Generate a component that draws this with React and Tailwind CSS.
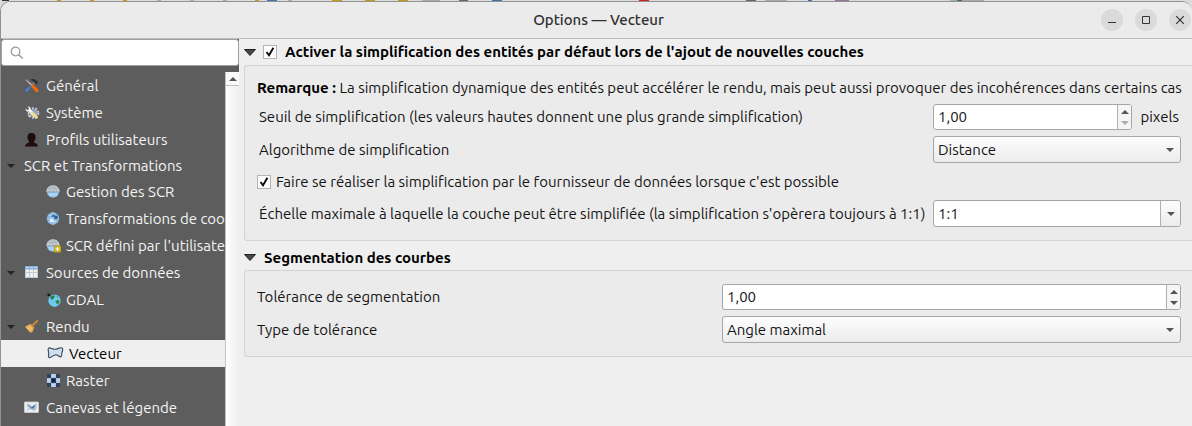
import { useState } from 'react';

const iconBox = 'h-4 w-4 shrink-0';

function ToolsIcon() {
  return (
    <svg className={iconBox} viewBox="0 0 16 16" aria-hidden="true">
      <path d="M2.200 13 7.500 7.500" stroke="#3f72b8" strokeWidth="2.800" strokeLinecap="round" />
      <path d="M2.500 12.700 4.500 10.500" stroke="#7fa8dc" strokeWidth=".9" />
      <path d="M3.500 3.200 8.500 7.800" stroke="#c4c4c4" strokeWidth="1.200" />
      <path d="M8.500 6.500 11.500 3.500" stroke="#8a8a8a" strokeWidth="1.400" />
      <path d="M8.500 8 13 12.700" stroke="#f0690c" strokeWidth="3.200" strokeLinecap="round" />
      <path d="M1.200 2.200 4 4.600 5 3.400 2.600 1.200z" fill="#9a9a9a" />
      <path d="M6 1.500C9 .2 12.500 .8 14 5.200L12 6.200 10.500 4.500 8.500 3z" fill="#2b2f33" />
    </svg>
  );
}

function GearWrenchIcon() {
  return (
    <svg className={iconBox} viewBox="0 0 16 16" aria-hidden="true">
      <circle cx="9.500" cy="8" r="4.800" fill="none" stroke="#c2cfdd" strokeWidth="2" strokeDasharray="2 1.400" />
      <circle cx="9.500" cy="8" r="4" fill="#94a6ba" />
      <path d="M1.500 3.500 3.200 5 4.800 4.400 4.600 2.500 3.200 1.500C5.400 1 6.800 2.400 6.700 4.200L9 7 7 9 4.600 6.600C2.500 6.800 1.300 5.500 1.500 3.500z" fill="#f4f4f4" />
      <path d="M8.300 8.500 12.200 12" stroke="#f0de92" strokeWidth="3.400" strokeLinecap="round" />
      <path d="M4 9.500 6 12" stroke="#e0e0e0" strokeWidth="1.200" />
    </svg>
  );
}

function UserIcon() {
  return (
    <svg className={iconBox} viewBox="0 0 16 16" aria-hidden="true">
      <path d="M7.500 1C4.500 1 3.200 3 3.400 5.600 3.600 7.600 4.600 9 5.400 9.800 5.400 11.200 1.200 11 1 14.500H14C13.800 11 9.700 11.200 9.700 9.800 10.700 8.800 11.500 7.400 11.600 5.400 11.800 2.800 10.400 1 7.500 1z" fill="#1d0d0c" />
    </svg>
  );
}

function GlobeIcon({ badge = false, arrows = false }) {
  const line = arrows ? '#b9d6f0' : '#98a6b5';
  return (
    <svg className={iconBox} viewBox="0 0 16 16" aria-hidden="true">
      <circle cx="7" cy="7.500" r="6.200" fill={arrows ? '#7fb0e0' : '#86b9ea'} />
      {!arrows && <path d="M.2 7.800C.4 4 3.500 1.200 7 1.200S13.600 4 13.800 7.800z" fill="#c6cace" />}
      <path d="M1 7.700H13M7 1.500V13.500M2.100 4.500H11.900M2.100 10.800H11.900" stroke={line} strokeWidth=".6" />
      <ellipse cx="7" cy="7.500" rx="3.200" ry="6" fill="none" stroke={line} strokeWidth=".6" />
      {!arrows && <path d="M2 9H12L10.500 12.300H3.500z" fill="#b5dbfa" opacity=".8" />}
      {arrows && (
        <>
          <path d="M5 5.200C7 3.500 9 3.800 10 5L11.500 4V8H7.800L9 6.500C8 5.500 6.500 5.500 5 5.200z" fill="#2c5f96" />
          <path d="M10 9.500C8.500 11.500 6.500 11.500 5.200 10.500L4 11.800V8H7.500L6.500 9.200C7.500 10 8.700 9.800 10 9.500z" fill="#eaf3fb" />
        </>
      )}
      {badge && (
        <>
          <rect x="8" y="7.500" width="7" height="7" rx="1" fill="#c3a00c" />
          <path d="M11.500 8.700V13.300M9.200 11H13.800M9.900 9.400 13.100 12.600M13.100 9.400 9.900 12.600" stroke="#fffbe0" strokeWidth=".9" />
        </>
      )}
    </svg>
  );
}

function TableIcon() {
  return (
    <svg className={iconBox} viewBox="0 0 16 16" aria-hidden="true" shapeRendering="crispEdges">
      <rect x="1" y="1" width="13" height="12" fill="#c3ccd6" />
      <rect x="1" y="1" width="13" height="3" fill="#83aedb" />
      <path d="M2 2h3v1H2zM6 2h3v1H6zM10 2h3v1h-3z" fill="#c4daf0" />
      <path d="M2 5h3v2H2zM6 5h3v2H6zM10 5h3v2h-3zM2 8h3v4H2zM6 8h3v4H6zM10 8h3v4h-3z" fill="#eef1f4" />
    </svg>
  );
}

function EarthIcon() {
  return (
    <svg className={iconBox} viewBox="0 0 16 16" aria-hidden="true">
      <circle cx="8.500" cy="8.700" r="6.200" fill="#6cc9f0" />
      <path d="M4.500 4.900C6 3.500 7.500 3.200 8.800 3.600L8.300 5.500 6.500 7.700 4.700 7z" fill="#2b7f3e" />
      <path d="M9.300 8.800 12.300 8 13.800 9.500 12 12.500 10.200 11.300z" fill="#2f8743" />
      <path d="M10.300 4 12.300 5 11.500 6.300z" fill="#3d9650" />
      <path d="M0 3H5M2.800 .8V4M1.200 1.200 4.800 4.800" stroke="#222" strokeWidth=".6" />
      <circle cx="2.900" cy="3" r="1" fill="#161616" />
    </svg>
  );
}

function BroomIcon() {
  return (
    <svg className={iconBox} viewBox="0 0 16 16" aria-hidden="true">
      <path d="M8.500 6.700 13.300 1.900" stroke="#cf9036" strokeWidth="1.800" strokeLinecap="round" />
      <path d="M1 7.800 6.500 4.800 10.200 8.500 8.500 13 6.200 13.800z" fill="#e6a954" />
      <path d="M3 8.300 7 12M5 7.200 8.200 10.300" stroke="#f8d69c" strokeWidth=".9" />
      <path d="M6.700 5.200 9.900 8.400" stroke="#b57d2c" strokeWidth="1" />
    </svg>
  );
}

function PolygonIcon() {
  return (
    <svg className="h-4 w-[19px] shrink-0" viewBox="0 0 19 16" aria-hidden="true">
      <path d="M2.500 2.300C4 .8 6 3.400 9 3.300 12 3.200 14 1 16 1.900 17.600 2.800 16.500 5 15.800 7 15.400 8.600 16.500 9.800 15 10.800 13.200 11.500 12.500 8.800 10 8.800 7 8.900 5.500 11.800 3.300 11.600 1.300 11 2.900 8.800 2.700 7 2.500 5 1.500 3.700 2.500 2.300z" fill="#d0dfef" stroke="#39495a" strokeWidth="1.100" />
    </svg>
  );
}

function RasterIcon() {
  return (
    <svg className={iconBox} viewBox="0 0 16 16" aria-hidden="true" shapeRendering="crispEdges">
      <rect x="1" y="1" width="13" height="13" fill="#2f415c" />
      <path d="M5 1h5v4H5zM1 5h4v5H1zM10 5h4v5h-4zM5 10h5v4H5z" fill="#a9c3df" />
      <path d="M6 1h3v3H6zM1 6h3v3H1zM11 6h3v3h-3zM6 11h3v3H6z" fill="#bdd2e8" />
      <path d="M6 6h3v3H6z" fill="#121f33" />
    </svg>
  );
}

function MapIcon() {
  return (
    <svg className={iconBox} viewBox="0 0 16 16" aria-hidden="true">
      <rect x=".5" y="2" width="14" height="10.500" rx=".6" fill="#efefef" stroke="#c8c8c8" />
      <path d="M3 3.500 5.500 4.500 8 6 12.500 3.500V8L10.500 11 8.500 10 6 9 3 10.500z" fill="#a4bcd6" />
      <path d="M4 5 7.500 7.500 11.500 4.200 9.500 8.300 7.500 8.500z" fill="#4d6c8e" />
      <path d="M3 6.500 5.500 8 3 9.500z" fill="#e6eef6" />
    </svg>
  );
}

const tree = [
  { label: 'Général', Icon: ToolsIcon },
  { label: 'Système', Icon: GearWrenchIcon },
  { label: 'Profils utilisateurs', Icon: UserIcon },
  { label: 'SCR et Transformations', open: true },
  { label: 'Gestion des SCR', Icon: GlobeIcon, child: true },
  { label: 'Transformations de coo', Icon: GlobeIcon, iconProps: { arrows: true }, child: true },
  { label: "SCR défini par l'utilisate", Icon: GlobeIcon, iconProps: { badge: true }, child: true },
  { label: 'Sources de données', Icon: TableIcon, open: true },
  { label: 'GDAL', Icon: EarthIcon, child: true },
  { label: 'Rendu', Icon: BroomIcon, open: true },
  { label: 'Vecteur', Icon: PolygonIcon, child: true },
  { label: 'Raster', Icon: RasterIcon, child: true },
  { label: 'Canevas et légende', Icon: MapIcon },
];

function Arrow({ up = false, className = '' }) {
  return (
    <svg className={`h-1 w-2 shrink-0 ${className}`} viewBox="0 0 8 4" aria-hidden="true">
      <path d={up ? 'M0 4 4 0 8 4z' : 'M0 0H8L4 4z'} fill="currentColor" />
    </svg>
  );
}

function TreeItem({ item, selected, onSelect }) {
  const { label, Icon, iconProps, child, open } = item;
  return (
    <li>
      <button
        type="button"
        onClick={onSelect}
        aria-current={selected ? 'page' : undefined}
        className={`flex w-full items-center whitespace-nowrap text-left ${Icon ? 'h-[27px]' : 'h-[25px]'} ${
          selected ? 'bg-[#efefef] text-black' : 'text-[#f4f4f4]'
        } ${child ? 'pl-[45px]' : 'pl-[6px]'}`}
      >
        {!child && (
          <span className="flex w-[17px] shrink-0">{open && <Arrow className="text-[#232323]" />}</span>
        )}
        {Icon && (
          <span className={`flex shrink-0 ${child ? 'mr-1' : 'mr-[6px]'}`}>
            <Icon {...iconProps} />
          </span>
        )}
        <span>{label}</span>
      </button>
    </li>
  );
}

function Check({ id, label, labelClass = '' }) {
  return (
    <span className="flex items-center">
      <span className="relative flex h-[14px] w-[14px] shrink-0">
        <input
          id={id}
          type="checkbox"
          defaultChecked
          className="peer h-[14px] w-[14px] appearance-none border border-[#b4b4b4] bg-white"
        />
        <svg className="pointer-events-none absolute inset-0 hidden peer-checked:block" viewBox="0 0 14 14" aria-hidden="true">
          <path d="M3.500 7 6 10.300 10.400 2.800" fill="none" stroke="#0c0c0c" strokeWidth="1.900" />
        </svg>
      </span>
      <label htmlFor={id} className={`whitespace-nowrap ${labelClass}`}>
        {label}
      </label>
    </span>
  );
}

function Spin({ id, className = '', downDisabled = false }) {
  return (
    <div className={`flex h-[26px] overflow-hidden rounded-[3px] border border-[#a6a6a6] bg-white ${className}`}>
      <input id={id} type="text" defaultValue="1,00" className="w-0 min-w-0 grow px-1 outline-none" />
      <div className="flex w-[14px] flex-col border-l border-[#b0b0b0] bg-[#f5f5f5]">
        <button type="button" aria-label="Augmenter" className="flex flex-1 items-center justify-center pt-px text-[#555]">
          <Arrow up />
        </button>
        <button
          type="button"
          aria-label="Diminuer"
          className={`flex flex-1 items-center justify-center pb-px ${downDisabled ? 'text-[#acacac]' : 'text-[#555]'}`}
        >
          <Arrow />
        </button>
      </div>
    </div>
  );
}

function Select({ id, options }) {
  return (
    <div className="relative">
      <select
        id={id}
        className="block h-[27px] w-full appearance-none rounded-[3px] border border-[#a6a6a6] bg-linear-to-b from-[#fdfdfd] to-[#ececec] px-1 outline-none"
      >
        {options.map((o) => (
          <option key={o}>{o}</option>
        ))}
      </select>
      <span className="pointer-events-none absolute inset-y-0 right-[7px] flex items-center text-[#555]">
        <Arrow />
      </span>
    </div>
  );
}

function GroupArrow() {
  return (
    <svg className="h-[7px] w-3 shrink-0" viewBox="0 0 12 7" aria-hidden="true">
      <path d="M.5 .5H11.500L6 6.500z" fill="#484848" stroke="#222" />
    </svg>
  );
}

function ToolbarPeek() {
  return (
    <svg className="block h-px w-full" viewBox="0 0 1192 1" preserveAspectRatio="none" aria-hidden="true">
      <path d="M2 .5h7" stroke="#333" />
      <path d="M57 .5h4M90 .5h4M123 .5h4M255 .5h4M332 .5h10M365 .5h10M398 .5h10" stroke="#c79a12" />
      <path d="M267 .5h10M492 .5h10M808 .5h4" stroke="#4470a5" />
      <path d="M157 .5h4M190 .5h4M223 .5h4M288 .5h4M422 .5h18M765 .5h22M950 .5h34" stroke="#aaa" />
      <path d="M639 .5h10" stroke="#c22" />
      <path d="M835 .5h14" stroke="#92749c" />
      <path d="M459 .5h9M746 .5h10" stroke="#666" />
      <path d="M957 .5h5" stroke="#3a7a3a" />
    </svg>
  );
}

export default function App() {
  const [selected, setSelected] = useState('Vecteur');
  const winBtn = 'flex h-[22px] w-[22px] items-center justify-center rounded-full bg-[#dadada]';
  return (
    <div className="flex min-h-screen flex-col bg-[#dcddda] font-['Ubuntu','Noto_Sans',sans-serif] text-[15px] leading-5 text-[#141414]">
      <ToolbarPeek />
      <div className="flex grow flex-col overflow-hidden rounded-t-[10px] border-l border-t border-[#929292] bg-[#efefef]">
        <header className="grid h-[37px] grid-cols-[1fr_auto_1fr] items-center border-b border-[#bdbdbd] bg-[#ebebeb] pl-1">
          <h1 className="col-start-2 font-medium text-[#303030]">Options — Vecteur</h1>
          <div className="flex justify-end gap-3 pr-px">
            <button type="button" aria-label="Réduire" className={winBtn}>
              <svg className="h-3 w-3" viewBox="0 0 12 12" aria-hidden="true">
                <path d="M2 8.500H10" stroke="#333" />
              </svg>
            </button>
            <button type="button" aria-label="Agrandir" className={winBtn}>
              <svg className="h-3 w-3" viewBox="0 0 12 12" aria-hidden="true">
                <path d="M2.500 2.500H9.500V9.500H2.500z" fill="none" stroke="#333" />
              </svg>
            </button>
            <button type="button" aria-label="Fermer" className={winBtn}>
              <svg className="h-3 w-3" viewBox="0 0 12 12" aria-hidden="true">
                <path d="M2.200 2.200 9.800 9.800M9.800 2.200 2.200 9.800" stroke="#333" strokeWidth="1.200" />
              </svg>
            </button>
          </div>
        </header>

        <div className="flex grow">
          <aside className="flex w-[238px] shrink-0 flex-col bg-[#5d5d5d]">
            <div className="flex h-[27px] shrink-0 items-center rounded-[3px] border border-[#a0a0a0] bg-white pl-2">
              <svg className="h-[14px] w-[14px] shrink-0" viewBox="0 0 14 14" aria-hidden="true">
                <circle cx="5.500" cy="5.500" r="4.300" fill="none" stroke="#9a9a9a" strokeWidth="1.200" />
                <path d="M8.600 8.600 12.700 12.500" stroke="#9a9a9a" strokeWidth="1.500" />
              </svg>
              <input type="search" aria-label="Rechercher" className="w-0 min-w-0 grow px-2 outline-none" />
            </div>
            <div className="flex grow pt-[6px]">
              <ul className="w-0 grow">
                {tree.map((item) => (
                  <TreeItem
                    key={item.label}
                    item={item}
                    selected={item.label === selected}
                    onSelect={() => setSelected(item.label)}
                  />
                ))}
              </ul>
              <div className="w-[14px] shrink-0 border-l border-[#c4c4c4] bg-linear-to-r from-white to-[#ededed]">
                <button
                  type="button"
                  aria-label="Défiler vers le haut"
                  className="flex h-[14px] w-full items-center justify-center border-b border-[#c0c0c0] bg-[#fafafa] text-[#555]"
                >
                  <Arrow up />
                </button>
              </div>
            </div>
          </aside>

          <main className="min-w-0 grow pl-[5px]">
            <section>
              <div className="flex h-[26px] items-center gap-[7px]">
                <GroupArrow />
                <Check
                  id="simplify"
                  label="Activer la simplification des entités par défaut lors de l'ajout de nouvelles couches"
                  labelClass="pl-2 font-bold text-black"
                />
              </div>
              <div className="rounded-l-[3px] border-y border-l border-[#d3d3d3] bg-[#ebebeb] pb-[13px] pl-3 pr-[11px] pt-3">
                <p className="whitespace-nowrap">
                  <strong className="text-black">Remarque :</strong> La simplification dynamique des entités peut accélérer le rendu, mais peut
                  aussi provoquer des incohérences dans certains cas
                </p>
                <div className="mt-[6px] grid grid-cols-[1fr_248px] items-center gap-y-[6px]">
                  <label htmlFor="threshold" className="whitespace-nowrap pl-0.5">
                    Seuil de simplification (les valeurs hautes donnent une plus grande simplification)
                  </label>
                  <div className="flex items-center gap-2 pr-0.5">
                    <Spin id="threshold" className="grow" downDisabled />
                    <span>pixels</span>
                  </div>
                  <label htmlFor="algo" className="pl-0.5">
                    Algorithme de simplification
                  </label>
                  <Select id="algo" options={['Distance', 'SnapToGrid', 'Visvalingam']} />
                  <div className="col-span-2 flex h-[25px] items-center">
                    <Check
                      id="provider"
                      label="Faire se réaliser la simplification par le fournisseur de données lorsque c'est possible"
                      labelClass="pl-[5px]"
                    />
                  </div>
                  <label htmlFor="scale" className="w-0 whitespace-nowrap pl-0.5">
                    Échelle maximale à laquelle la couche peut être simplifiée (la simplification s'opèrera toujours à 1:1)
                  </label>
                  <div className="flex h-[27px] overflow-hidden rounded-[3px] border border-[#a6a6a6] bg-white">
                    <input id="scale" type="text" defaultValue="1:1" className="w-0 min-w-0 grow px-1 outline-none" />
                    <button
                      type="button"
                      aria-label="Choisir une échelle"
                      className="flex w-5 items-center justify-center border-l border-[#b0b0b0] bg-linear-to-b from-[#fdfdfd] to-[#ececec] text-[#555]"
                    >
                      <Arrow />
                    </button>
                  </div>
                </div>
              </div>
            </section>

            <section>
              <div className="flex h-[29px] items-center gap-2 pt-1">
                <GroupArrow />
                <h2 className="font-bold text-black">Segmentation des courbes</h2>
              </div>
              <div className="grid grid-cols-2 items-center gap-x-[6px] gap-y-[6px] rounded-l-[3px] border-y border-l border-[#d3d3d3] bg-[#ebebeb] py-[13px] pl-3 pr-[11px]">
                <label htmlFor="tolerance">Tolérance de segmentation</label>
                <Spin id="tolerance" />
                <label htmlFor="tolerance-type">Type de tolérance</label>
                <Select id="tolerance-type" options={['Angle maximal', 'Différence maximale']} />
              </div>
            </section>
          </main>
        </div>
      </div>
    </div>
  );
}
